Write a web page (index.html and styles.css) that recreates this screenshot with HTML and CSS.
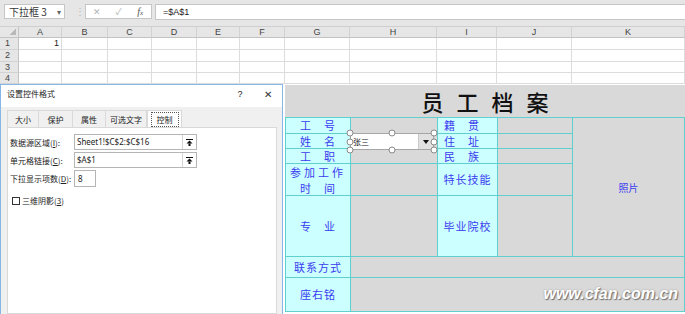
FILE: index.html
```html
<!DOCTYPE html>
<html lang="zh-CN">
<head>
  <meta charset="UTF-8" />
  <meta name="viewport" content="width=device-width, initial-scale=1.0"/>
  <title>员工档案 – 设置控件格式</title>
  <link rel="stylesheet" href="styles.css">
</head>
<body>

  <div class="formula-bar">
    <div class="name-box">
      <span>下拉框 3</span>
      <span class="name-caret">▾</span>
    </div>
    <span class="grip">⋮</span>
    <div class="fx-buttons">
      <span class="fx-btn">✕</span>
      <span class="fx-btn">✓</span>
      <span class="fx-btn fx-label">f<small>x</small></span>
    </div>
    <div class="formula-input">=$A$1</div>
  </div>

  <div class="sheet-top">
    <div class="corner"></div>
    <div class="col-head">A</div>
    <div class="col-head">B</div>
    <div class="col-head">C</div>
    <div class="col-head">D</div>
    <div class="col-head">E</div>
    <div class="col-head">F</div>
    <div class="col-head">G</div>
    <div class="col-head">H</div>
    <div class="col-head">I</div>
    <div class="col-head">J</div>
    <div class="col-head">K</div>

    <div class="row-head">1</div>
    <div class="cell num">1</div>
    <div class="cell"></div><div class="cell"></div><div class="cell"></div><div class="cell"></div><div class="cell"></div>
    <div class="cell"></div><div class="cell"></div><div class="cell"></div><div class="cell"></div><div class="cell"></div>

    <div class="row-head">2</div>
    <div class="cell"></div><div class="cell"></div><div class="cell"></div><div class="cell"></div><div class="cell"></div>
    <div class="cell"></div><div class="cell"></div><div class="cell"></div><div class="cell"></div><div class="cell"></div><div class="cell"></div>

    <div class="row-head">3</div>
    <div class="cell"></div><div class="cell"></div><div class="cell"></div><div class="cell"></div><div class="cell"></div>
    <div class="cell"></div><div class="cell"></div><div class="cell"></div><div class="cell"></div><div class="cell"></div><div class="cell"></div>

    <div class="row-head">4</div>
    <div class="cell"></div><div class="cell"></div><div class="cell"></div><div class="cell"></div><div class="cell"></div>
    <div class="cell"></div><div class="cell"></div><div class="cell"></div><div class="cell"></div><div class="cell"></div><div class="cell"></div>
  </div>

  <div class="lower">

    <div class="dialog">
      <div class="dialog-title">
        <span>设置控件格式</span>
        <span class="dialog-help">?</span>
        <span class="dialog-close">✕</span>
      </div>

      <div class="tabs">
        <span class="tab w32">大小</span>
        <span class="tab w34">保护</span>
        <span class="tab w33">属性</span>
        <span class="tab w41">可选文字</span>
        <span class="tab w35 active"><span class="tab-focus">控制</span></span>
      </div>

      <div class="tab-panel">
        <div class="field">
          <label class="field-label">数据源区域(<u>I</u>):</label>
          <div class="ref-input">
            <span class="ref-text">Sheet1!$C$2:$C$16</span>
            <span class="ref-btn">
              <svg width="7" height="7" viewBox="0 0 7 7"><rect x="0" y="0" width="7" height="1" fill="#111"/><polygon points="3.5,1.5 0.5,4.5 6.5,4.5" fill="#111"/><rect x="2.5" y="4.5" width="2" height="2.5" fill="#111"/></svg>
            </span>
          </div>
        </div>
        <div class="field">
          <label class="field-label">单元格链接(<u>C</u>):</label>
          <div class="ref-input">
            <span class="ref-text">$A$1</span>
            <span class="ref-btn">
              <svg width="7" height="7" viewBox="0 0 7 7"><rect x="0" y="0" width="7" height="1" fill="#111"/><polygon points="3.5,1.5 0.5,4.5 6.5,4.5" fill="#111"/><rect x="2.5" y="4.5" width="2" height="2.5" fill="#111"/></svg>
            </span>
          </div>
        </div>
        <div class="field tall">
          <label class="field-label">下拉显示项数(<u>D</u>):</label>
          <div class="num-input">8</div>
        </div>
        <div class="check-row">
          <span class="checkbox"></span>
          <span>三维阴影(<u>3</u>)</span>
        </div>
      </div>
    </div>

    <div class="sheet-right">
      <div class="archive-title">员工档案</div>
      <div class="archive">
        <div class="lbl">工&emsp;号</div>
        <div class="val"></div>
        <div class="lbl left">籍&emsp;贯</div>
        <div class="val"></div>
        <div class="photo">照片</div>

        <div class="lbl">姓&emsp;名</div>
        <div class="val"></div>
        <div class="lbl left">住&emsp;址</div>
        <div class="val"></div>

        <div class="lbl">工&emsp;职</div>
        <div class="val"></div>
        <div class="lbl left">民&emsp;族</div>
        <div class="val"></div>

        <div class="lbl stack"><span class="spread">参加工作</span><span>时&emsp;间</span></div>
        <div class="val"></div>
        <div class="lbl">特长技能</div>
        <div class="val"></div>

        <div class="lbl">专&emsp;业</div>
        <div class="val"></div>
        <div class="lbl">毕业院校</div>
        <div class="val"></div>

        <div class="lbl">联系方式</div>
        <div class="val wide"></div>

        <div class="lbl">座右铭</div>
        <div class="val wide"></div>
      </div>

      <!-- 浮动的下拉框控件 -->
      <div class="combo">
        <div class="combo-box">
          <span class="combo-text">张三</span>
          <span class="combo-btn">
            <svg width="6" height="4" viewBox="0 0 6 4"><polygon points="0,0 6,0 3,4" fill="#111"/></svg>
          </span>
        </div>
        <span class="handle h-tl"></span>
        <span class="handle h-tc"></span>
        <span class="handle h-tr"></span>
        <span class="handle h-ml"></span>
        <span class="handle h-mr"></span>
        <span class="handle h-bl"></span>
        <span class="handle h-bc"></span>
        <span class="handle h-br"></span>
      </div>

      <div class="watermark">www.cfan.com.cn</div>
    </div>

  </div>

</body>
</html>
```

FILE: styles.css
```css
* {
  box-sizing: border-box;
}
body {
  margin: 0;
  width: 685px;
  height: 314px;
  overflow: hidden;
  background: #fff;
  color: #222;
  font-family: "Noto Sans", "Noto Sans CJK SC", sans-serif;
}

/* Barra de fórmulas */
.formula-bar {
  display: flex;
  align-items: flex-start;
  height: 27px;
  padding: 4px 0 0 4px;
  background: #e6e6e6;
  border-bottom: 1px solid #cfcfcf;
}
.name-box {
  display: flex;
  align-items: center;
  justify-content: space-between;
  width: 61px;
  height: 15px;
  padding: 0 3px 0 4px;
  background: #fff;
  border: 1px solid #c6c6c6;
  font-family: "Noto Sans CJK SC", sans-serif;
  font-size: 10px;
  color: #333;
}
.name-caret {
  font-size: 8px;
  color: #666;
}
.grip {
  width: 20px;
  padding-left: 10px;
  font-size: 10px;
  line-height: 15px;
  color: #b5b5b5;
}
.fx-buttons {
  display: flex;
  width: 67px;
  height: 15px;
  background: #fff;
  border: 1px solid #c6c6c6;
}
.fx-btn {
  width: 22px;
  text-align: center;
  font-size: 9px;
  line-height: 13px;
  color: #b5b5b5;
}
.fx-label {
  font-family: "Liberation Serif", serif;
  font-style: italic;
  font-size: 10px;
  color: #555;
}
.fx-label small {
  font-size: 7px;
}
.formula-input {
  flex: 1;
  height: 16px;
  margin-left: 3px;
  padding-left: 7px;
  background: #fff;
  border: 1px solid #c6c6c6;
  border-right: none;
  font-family: "Liberation Sans", sans-serif;
  font-size: 9px;
  line-height: 14px;
  color: #222;
}

/* Cuadrícula superior */
.sheet-top {
  display: grid;
  grid-template-columns: 19px 43px 46px 44px 45px 43px 45px 65px 87px 60px 75px 113px;
  grid-template-rows: 11px 12px 12px 11px 11px;
  font-family: "Liberation Sans", sans-serif;
  font-size: 9px;
  color: #444;
}
.corner {
  background: linear-gradient(to top left, #b8b8b8 50%, transparent 50%) no-repeat right 2px bottom 2px / 7px 7px, #e6e6e6;
  border-right: 1px solid #c2c2c2;
  border-bottom: 1px solid #c2c2c2;
}
.col-head {
  background: #e6e6e6;
  border-right: 1px solid #d2d2d2;
  border-bottom: 1px solid #c2c2c2;
  text-align: center;
  line-height: 10px;
}
.row-head {
  background: #e6e6e6;
  border-right: 1px solid #c2c2c2;
  border-bottom: 1px solid #d2d2d2;
  padding-left: 5px;
  line-height: 11px;
}
.cell {
  border-right: 1px solid #dcdcdc;
  border-bottom: 1px solid #dcdcdc;
}
.cell.num {
  text-align: right;
  padding-right: 2px;
  line-height: 11px;
  color: #222;
}

.lower {
  display: flex;
  height: 230px;
}

/* Diálogo */
.dialog {
  display: flex;
  flex-direction: column;
  flex: none;
  width: 283px;
  border: 1px solid #86b7e6;
  border-bottom: none;
  background: #f0f0f0;
  font-family: "Noto Sans CJK SC", sans-serif;
  font-size: 8px;
  color: #222;
}
.dialog-title {
  display: flex;
  align-items: flex-start;
  height: 22px;
  padding: 3px 8px 0 6px;
  background: #fff;
  line-height: 12px;
}
.dialog-help {
  width: 10px;
  margin-left: auto;
  text-align: center;
  font-family: "Liberation Sans", sans-serif;
  font-size: 9px;
}
.dialog-close {
  width: 12px;
  margin-left: 17px;
  text-align: center;
  font-size: 10px;
  color: #333;
}

.tabs {
  display: flex;
  height: 20px;
  padding: 3px 0 0 6px;
}
.tab {
  display: flex;
  align-items: center;
  justify-content: center;
  height: 17px;
  border: 1px solid #d9d9d9;
  border-bottom: none;
  border-left: none;
}
.tab:first-child {
  border-left: 1px solid #d9d9d9;
}
.tab.active {
  background: #fff;
  border-left: 1px solid #d9d9d9;
}
.tab-focus {
  padding: 1px 5px;
  border: 1px dotted #555;
}
.w32 { width: 32px; }
.w34 { width: 34px; }
.w33 { width: 33px; }
.w41 { width: 41px; }
.w35 { width: 35px; }

.tab-panel {
  flex: 1;
  margin: 0 5px 0 6px;
  padding: 6px 0 0 2px;
  background: #fff;
  border: 1px solid #d9d9d9;
}
.field {
  display: flex;
  align-items: center;
  height: 16px;
  margin-bottom: 2px;
}
.field.tall {
  height: 17px;
}
.field-label {
  width: 64px;
  white-space: nowrap;
}
.ref-input {
  display: flex;
  width: 123px;
  height: 16px;
  background: #fff;
  border: 1px solid #b5b5b5;
}
.ref-text {
  flex: 1;
  padding-left: 2px;
  font-family: "Noto Sans", sans-serif;
  line-height: 14px;
}
.ref-btn {
  display: flex;
  align-items: center;
  justify-content: center;
  width: 14px;
  border-left: 1px solid #d4d4d4;
}
.num-input {
  width: 22px;
  height: 17px;
  padding-left: 3px;
  border: 1px solid #b5b5b5;
  font-family: "Noto Sans", sans-serif;
  line-height: 15px;
}
.check-row {
  display: flex;
  align-items: center;
  gap: 2px;
  margin: 8px 0 0 2px;
}
.checkbox {
  width: 8px;
  height: 8px;
  border: 1px solid #333;
}

/* Hoja derecha */
.sheet-right {
  position: relative;
  flex: 1;
  padding: 1px 0 0 2px;
  background: #fff;
  font-family: "Noto Sans CJK SC", sans-serif;
}
.archive-title {
  height: 32px;
  padding-left: 13px;
  background: #d9d9d9;
  text-align: center;
  font-size: 22px;
  font-weight: 500;
  line-height: 32px;
  letter-spacing: 13px;
  color: #111;
}
.archive {
  display: grid;
  grid-template-columns: 64px 86px 59px 74px 111px;
  grid-template-rows: 15px 14px 14px 31px 60px 20px 33px;
  gap: 1px;
  padding: 1px;
  background: #62cfcf;
}
.lbl {
  display: flex;
  align-items: center;
  justify-content: center;
  background: #ccffff;
  color: #3b3bf0;
  font-size: 11px;
  line-height: 11px;
  letter-spacing: 1px;
  white-space: nowrap;
}
.lbl.left {
  justify-content: flex-start;
  padding-left: 6px;
}
.lbl.stack {
  flex-direction: column;
  line-height: 16px;
}
.spread {
  letter-spacing: 3px;
}
.val {
  background: #d9d9d9;
}
.val.wide {
  grid-column: 2 / 6;
}
.photo {
  grid-row: span 5;
  display: flex;
  align-items: center;
  justify-content: center;
  background: #d9d9d9;
  color: #3b3bf0;
  font-size: 10px;
}

/* Control flotante */
.combo {
  position: absolute;
  left: 67px;
  top: 49px;
  width: 84px;
  height: 17px;
}
.combo-box {
  display: flex;
  height: 100%;
  background: #fff;
  border: 1px solid #a6a6a6;
}
.combo-text {
  flex: 1;
  padding-left: 2px;
  font-size: 8px;
  line-height: 15px;
  color: #111;
}
.combo-btn {
  display: flex;
  align-items: center;
  justify-content: center;
  width: 15px;
  background: #e1e1e1;
  border-left: 1px solid #c8c8c8;
}
.handle {
  position: absolute;
  width: 7px;
  height: 7px;
  border: 1px solid #8a8a8a;
  border-radius: 50%;
  background: #fff;
  transform: translate(-50%, -50%);
}
.h-tl { left: 0; top: 0; }
.h-tc { left: 50%; top: 0; }
.h-tr { left: 100%; top: 0; }
.h-ml { left: 0; top: 50%; }
.h-mr { left: 100%; top: 50%; }
.h-bl { left: 0; top: 100%; }
.h-bc { left: 50%; top: 100%; }
.h-br { left: 100%; top: 100%; }

.watermark {
  position: absolute;
  right: 7px;
  bottom: 11px;
  font-family: "Liberation Sans", sans-serif;
  font-size: 16px;
  font-style: italic;
  font-weight: bold;
  color: #fff;
  text-shadow: 1px 1px 1px #707070, 0 0 2px #9a9a9a;
}
```
